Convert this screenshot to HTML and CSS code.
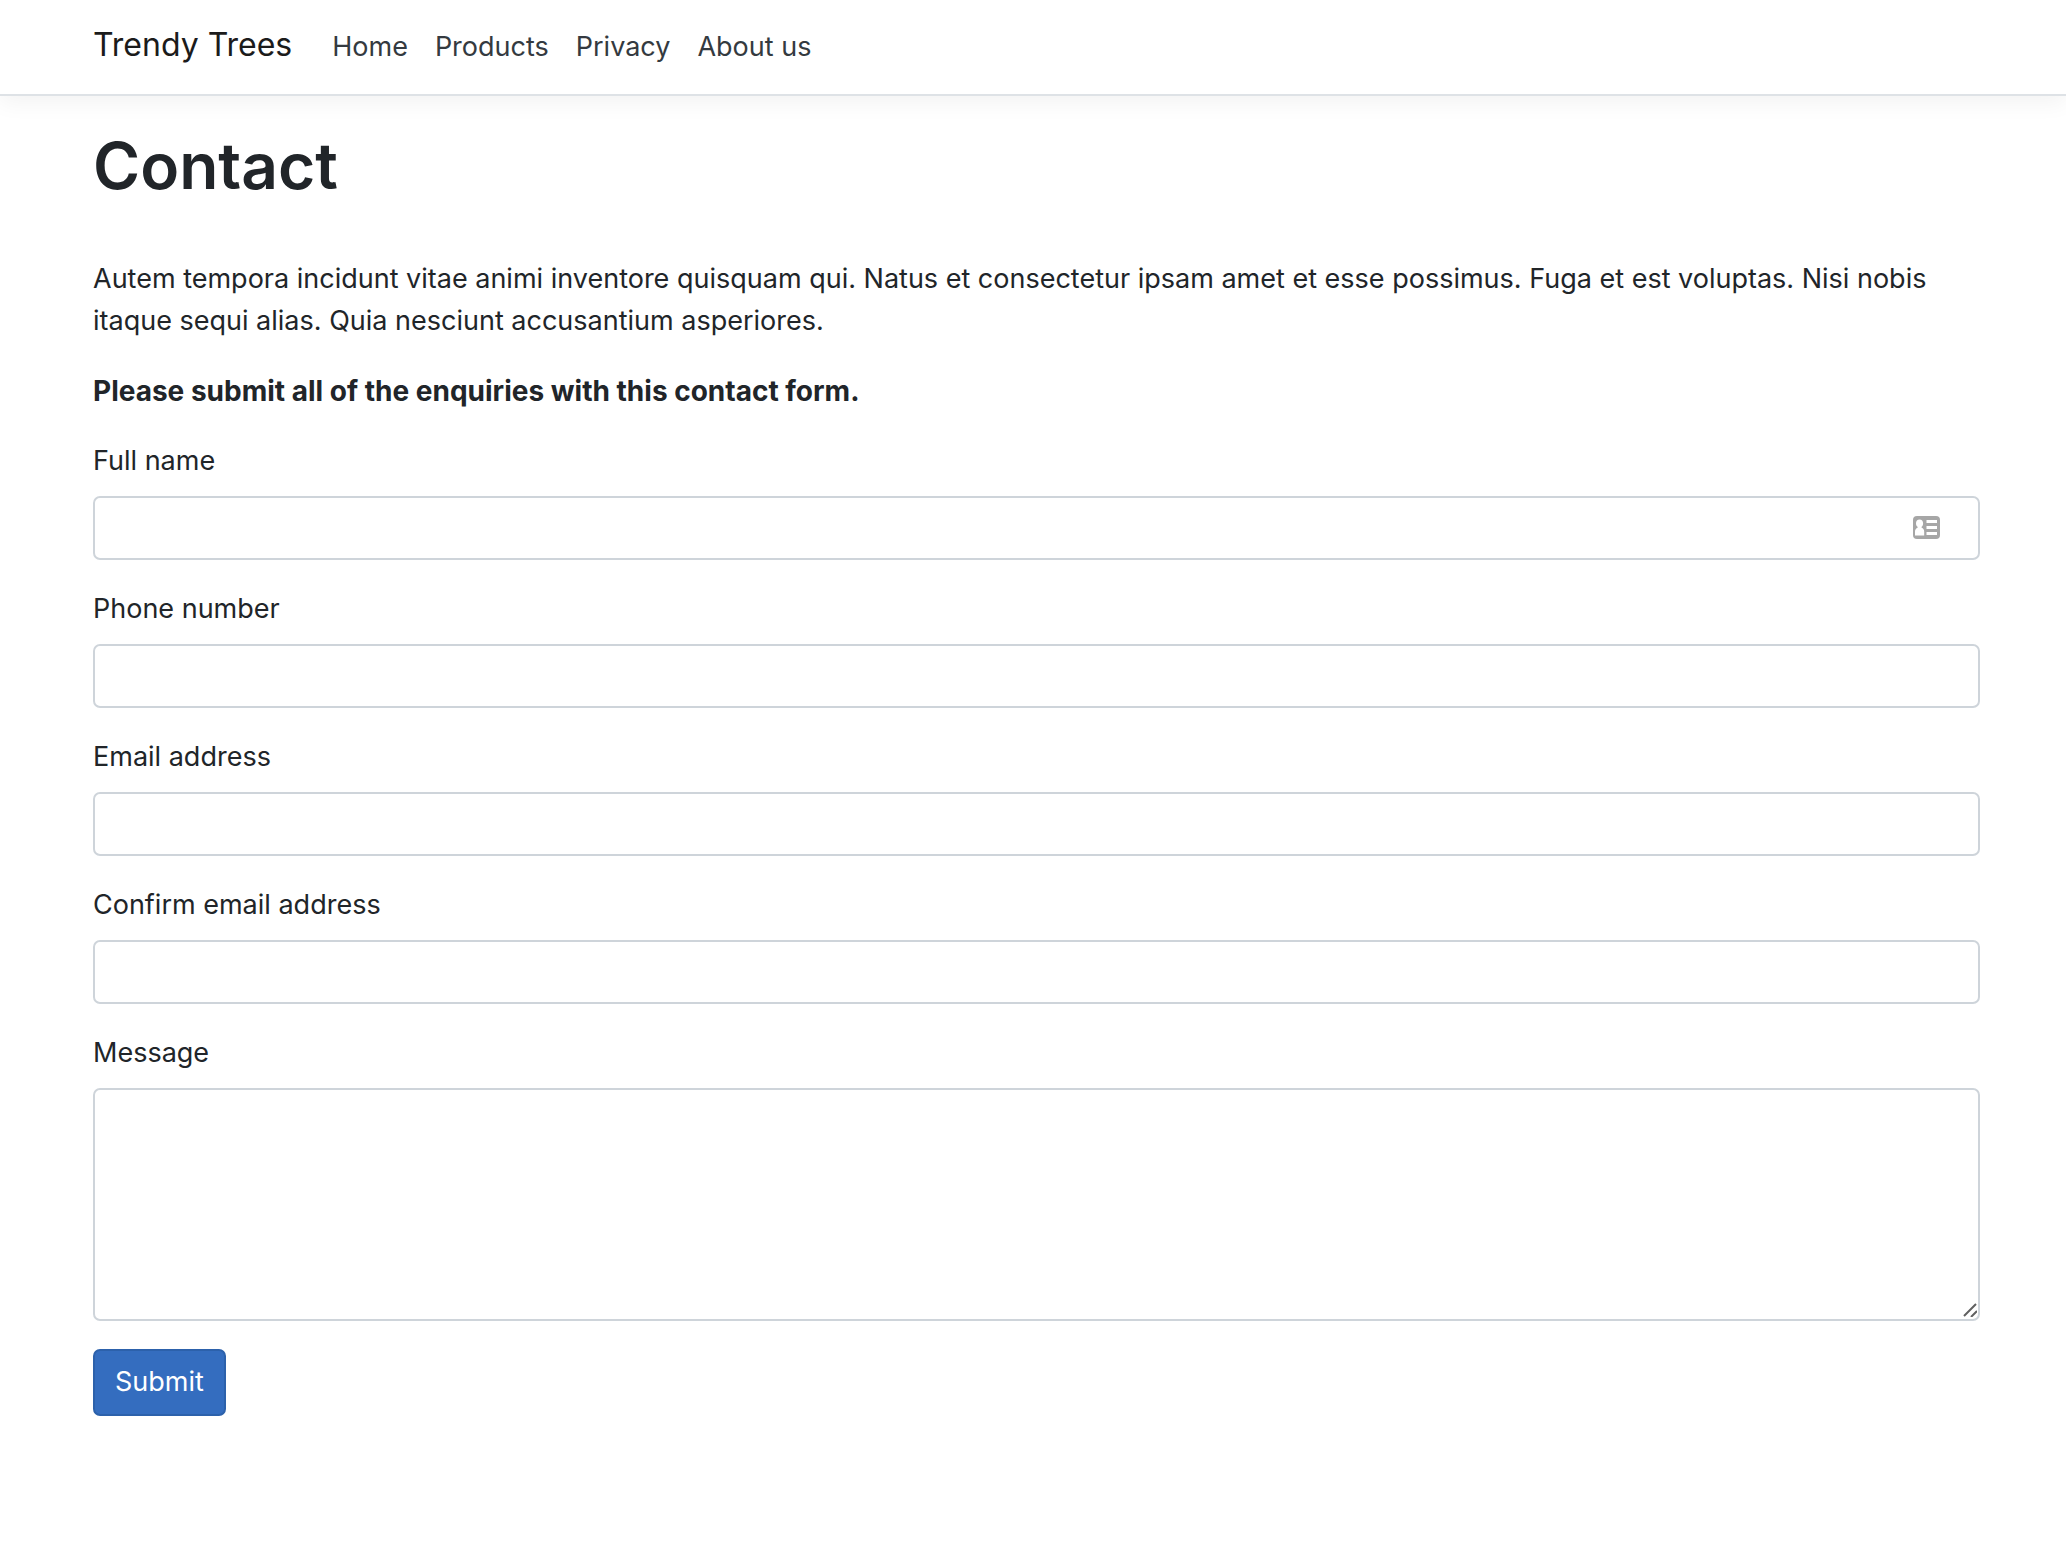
FILE: index.html
```html
<!DOCTYPE html>
<html lang="en">
<head>
  <meta charset="utf-8">
  <meta name="viewport" content="width=device-width, initial-scale=1">
  <title>Contact - Trendy Trees</title>
  <link rel="stylesheet" href="styles.css">
</head>
<body>
  <header class="site-header">
    <a class="brand" href="#">Trendy Trees</a>
    <nav class="site-nav">
      <a class="nav-link" href="#">Home</a>
      <a class="nav-link" href="#">Products</a>
      <a class="nav-link" href="#">Privacy</a>
      <a class="nav-link" href="#">About us</a>
    </nav>
  </header>
  <main class="content">
    <h1 class="title">Contact</h1>
    <p class="text">Autem tempora incidunt vitae animi inventore quisquam qui. Natus et consectetur ipsam amet et esse possimus. Fuga et est voluptas. Nisi nobis itaque sequi alias. Quia nesciunt accusantium asperiores.</p>
    <p class="text notice">Please submit all of the enquiries with this contact form.</p>
    <form class="contact-form">
      <div class="field">
        <label for="name">Full name</label>
        <div class="control-wrap">
          <input class="control" id="name" type="text">
          <svg class="card-icon" viewBox="0 0 27 23" aria-hidden="true">
            <rect width="27" height="23" rx="4" fill="#a6a6a6"/>
            <path fill="#fff" d="M6.500 3.500c2.300 0 3.600 1.500 3.600 3.700 0 1.600-.6 2.900-1.500 3.600v1c1.700.6 2.600 1.900 2.600 4v3.700H2v-3.700c0-2.100 1-3.400 2.600-4v-1C3.600 10.100 3 8.800 3 7.200 3 5 4.300 3.500 6.500 3.500zM13.500 4h10.500v3H13.500zM13.500 10h10.500v3H13.500zM13.500 16h10.500v3H13.500z"/>
          </svg>
        </div>
      </div>
      <div class="field">
        <label for="phone">Phone number</label>
        <input class="control" id="phone" type="tel">
      </div>
      <div class="field">
        <label for="email">Email address</label>
        <input class="control" id="email" type="email">
      </div>
      <div class="field">
        <label for="confirm">Confirm email address</label>
        <input class="control" id="confirm" type="email">
      </div>
      <div class="field">
        <label for="message">Message</label>
        <div class="control-wrap">
          <textarea class="control message" id="message"></textarea>
          <svg class="grip" viewBox="0 0 14 14" aria-hidden="true">
            <path d="M1 13L13 1M8 14l6-6" fill="none" stroke="#606060" stroke-width="2"/>
          </svg>
        </div>
      </div>
      <button class="submit" type="submit">Submit</button>
    </form>
  </main>
</body>
</html>
```
FILE: styles.css
```css
* {
  box-sizing: border-box;
}

body {
  margin: 0;
  background: #fff;
  color: #212529;
  font: 27px/42px Inter, "Liberation Sans", sans-serif;
}

.site-header {
  display: flex;
  align-items: center;
  gap: 40px;
  height: 96px;
  padding: 0 86px 4px 93px;
  border-bottom: 2px solid #dee2e6;
  box-shadow: 0 7px 21px rgba(0, 0, 0, 0.05);
}

.brand {
  color: #1b1b1b;
  font-size: 32px;
  text-decoration: none;
}

.site-nav {
  display: flex;
  gap: 27px;
  padding-top: 3px;
}

.nav-link {
  color: #343a40;
  text-decoration: none;
}

.content {
  padding: 28px 86px 56px 93px;
}

.title {
  margin: 0 0 50px;
  font-size: 64px;
  font-weight: 600;
  line-height: 84px;
}

.text {
  margin: 0 0 28px;
}

.notice {
  font-size: 28px;
  font-weight: 700;
}

.contact-form {
  display: flex;
  flex-direction: column;
  align-items: stretch;
  gap: 28px;
}

.field {
  display: flex;
  flex-direction: column;
  gap: 14px;
}

.control-wrap {
  display: flex;
  position: relative;
}

.control {
  display: block;
  width: 100%;
  height: 64px;
  margin: 0;
  padding: 9px 20px;
  border: 2px solid #ced4da;
  border-radius: 7px;
  background: #fff;
  color: inherit;
  font: inherit;
}

.message {
  height: 233px;
  resize: vertical;
}

.message::-webkit-resizer {
  background: transparent;
}

.card-icon {
  position: absolute;
  top: 20px;
  right: 40px;
  width: 27px;
  height: 23px;
}

.grip {
  position: absolute;
  right: 3px;
  bottom: 4px;
  width: 14px;
  height: 14px;
  pointer-events: none;
}

.submit {
  align-self: flex-start;
  padding: 10px 20px 11px;
  border: 2px solid #2c61ab;
  border-radius: 7px;
  background: #346dbf;
  color: #fff;
  font: inherit;
}
```
